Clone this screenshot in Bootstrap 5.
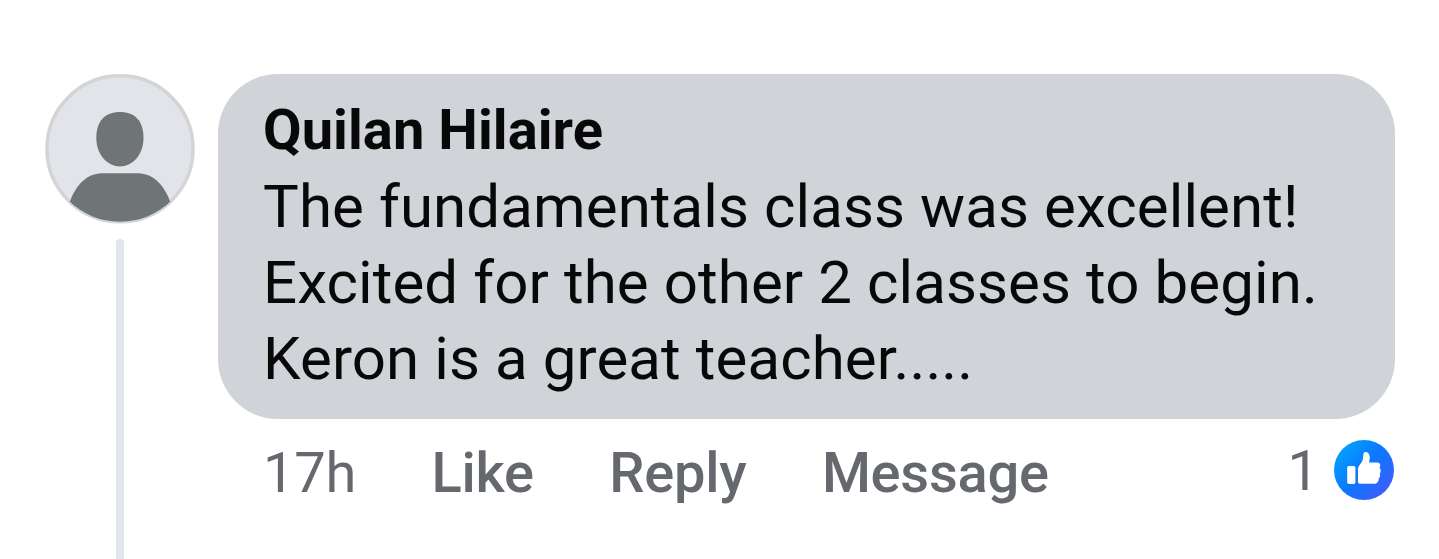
<!DOCTYPE html>
<html lang="en">
<head>
<meta charset="utf-8">
<title>Comment</title>
<link href="https://cdn.jsdelivr.net/npm/bootstrap@5.3.0/dist/css/bootstrap.min.css" rel="stylesheet">
<style>
body{font-family:Roboto,sans-serif;background:#fff;color:#080809;height:559px;overflow:hidden}
.thread{height:559px;padding:73px 44px 0 44px}
.avatar-col{width:152px;margin-right:22px}
.avatar-col svg{width:152px;height:152px;flex:none}
.thread-line{width:8px;margin-top:14px;border-radius:4px 4px 0 0;background:#e2e5e9}
.bubble{height:345px;margin-top:1px;padding:18px 45px 0;border-radius:60px;background:#d0d3d8}
.author{font-size:56px;line-height:77px;font-weight:700;letter-spacing:.06px;white-space:nowrap}
.message{font-size:60px;line-height:76px;letter-spacing:.1px;white-space:nowrap}
.actions{height:102px;padding:0 1px 0 45px;font-size:56px;line-height:1;color:#65686c;white-space:nowrap}
.action-links{gap:75.500px;letter-spacing:-.25px;padding-top:6px}
.action{font-weight:500;color:#65686c;text-decoration:none}
.reaction{gap:15px}
.reaction-count{padding-top:2px}
</style>
</head>
<body>
<main class="thread d-flex">
  <div class="avatar-col d-flex flex-column align-items-center flex-shrink-0">
    <svg viewBox="0 0 152 152" aria-hidden="true">
      <defs><clipPath id="face"><circle cx="76" cy="75.500" r="73.200"/></clipPath></defs>
      <circle cx="76" cy="75.800" r="73" fill="#e2e4e9" stroke="#d3d4d6" stroke-width="3.500"/>
      <g clip-path="url(#face)" fill="#6f7477"><path d="M76 39C91 39 99.500 48 99.500 65C99.500 82 88 93.500 76 93.500S52.300 82 52.300 65C52.300 48 61 39 76 39Z"/><path d="M22 160V142C28 114 42 100.300 58 100.300H94C110 100.300 124 114 130 142V160Z"/></g>
    </svg>
    <div class="thread-line flex-grow-1"></div>
  </div>
  <div class="flex-grow-1">
    <section class="bubble">
      <div class="author">Quilan Hilaire</div>
      <div class="message">The fundamentals class was excellent!<br>Excited for the other 2 classes to begin.<br>Keron is a great teacher.....</div>
    </section>
    <div class="actions d-flex align-items-center justify-content-between">
      <div class="action-links d-flex">
        <span>17h</span>
        <a class="action" href="#">Like</a>
        <a class="action" href="#">Reply</a>
        <a class="action" href="#">Message</a>
      </div>
      <div class="reaction d-flex align-items-center">
        <span class="reaction-count">1</span>
        <svg width="60" height="60" viewBox="0 0 60 60" role="img" aria-label="Like">
          <defs><linearGradient id="blue" x1="0.100" y1="0.150" x2="0.900" y2="0.850"><stop offset="0" stop-color="#02a0fc"/><stop offset=".5" stop-color="#0b78fe"/><stop offset="1" stop-color="#3e5cfc"/></linearGradient></defs>
          <circle cx="30" cy="30" r="30" fill="url(#blue)"/>
          <g fill="#fff"><rect x="13.200" y="26" width="8.200" height="18" rx="1.800"/><path d="M24 41.500V29C24 26 27.500 23.500 28.700 20L29.500 14C29.800 11.500 32.500 11.600 34 13C36.500 15.500 36 19.500 35 22.500H43.500C46 22.500 47.300 25.500 45.500 27.500C47.200 29.500 47 32 45.800 33.500C46.700 35.500 46 37.300 44.700 38.500C44.800 41.800 43 43.800 40 43.800H26.500C25 43.800 24 43 24 41.500Z"/></g>
        </svg>
      </div>
    </div>
  </div>
</main>
<script src="https://cdn.jsdelivr.net/npm/bootstrap@5.3.0/dist/js/bootstrap.bundle.min.js"></script>
</body>
</html>
